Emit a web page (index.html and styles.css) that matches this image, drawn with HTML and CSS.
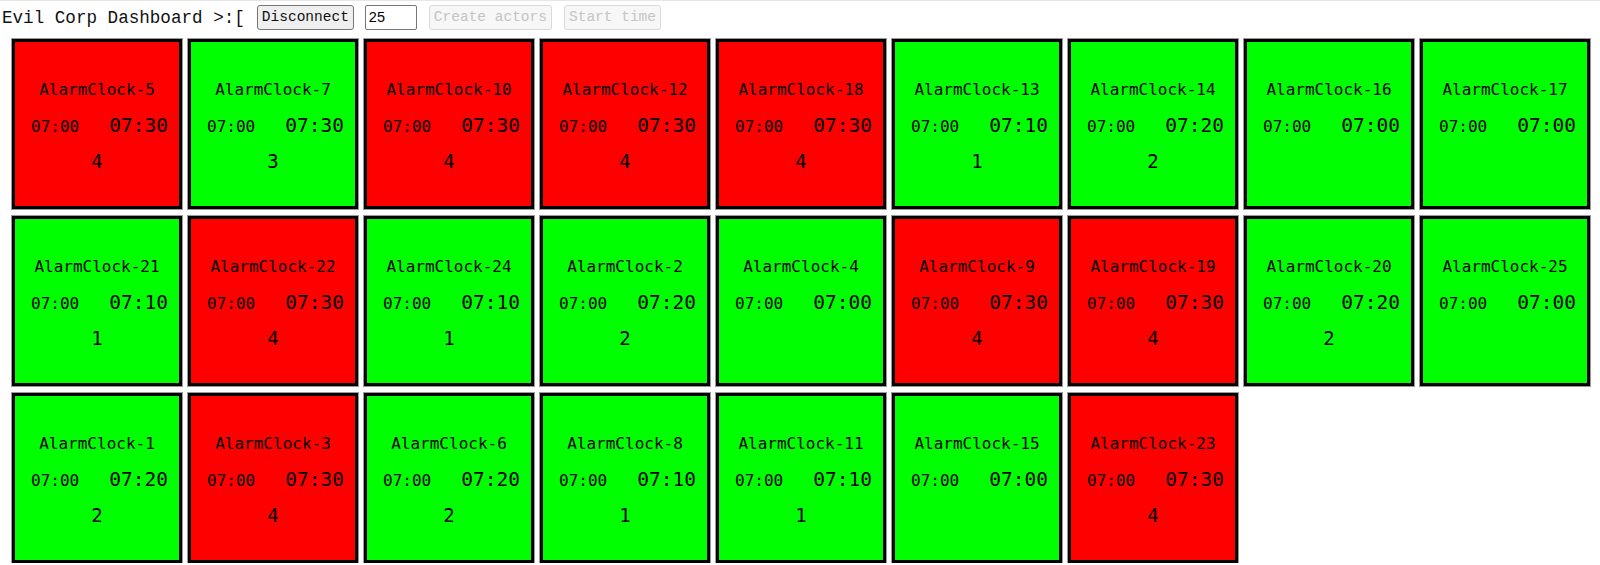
FILE: index.html
```html
<!DOCTYPE html>
<html>
<head>
<meta charset="utf-8">
<title>Evil Corp Dashboard</title>
<link rel="stylesheet" href="styles.css">
</head>
<body>
<div class="toolbar">
  <span class="title">Evil Corp Dashboard &gt;:[</span>
  <button class="btn">Disconnect</button>
  <input class="count" type="text" value="25">
  <button class="btn" disabled>Create actors</button>
  <button class="btn" disabled>Start time</button>
</div>
<div class="grid">
  <div class="clock red"><div class="name">AlarmClock-5</div><div class="times"><span class="set">07:00</span><span class="now">07:30</span></div><div class="snooze">4</div></div>
  <div class="clock green"><div class="name">AlarmClock-7</div><div class="times"><span class="set">07:00</span><span class="now">07:30</span></div><div class="snooze">3</div></div>
  <div class="clock red"><div class="name">AlarmClock-10</div><div class="times"><span class="set">07:00</span><span class="now">07:30</span></div><div class="snooze">4</div></div>
  <div class="clock red"><div class="name">AlarmClock-12</div><div class="times"><span class="set">07:00</span><span class="now">07:30</span></div><div class="snooze">4</div></div>
  <div class="clock red"><div class="name">AlarmClock-18</div><div class="times"><span class="set">07:00</span><span class="now">07:30</span></div><div class="snooze">4</div></div>
  <div class="clock green"><div class="name">AlarmClock-13</div><div class="times"><span class="set">07:00</span><span class="now">07:10</span></div><div class="snooze">1</div></div>
  <div class="clock green"><div class="name">AlarmClock-14</div><div class="times"><span class="set">07:00</span><span class="now">07:20</span></div><div class="snooze">2</div></div>
  <div class="clock green"><div class="name">AlarmClock-16</div><div class="times"><span class="set">07:00</span><span class="now">07:00</span></div><div class="snooze"></div></div>
  <div class="clock green"><div class="name">AlarmClock-17</div><div class="times"><span class="set">07:00</span><span class="now">07:00</span></div><div class="snooze"></div></div>

  <div class="clock green"><div class="name">AlarmClock-21</div><div class="times"><span class="set">07:00</span><span class="now">07:10</span></div><div class="snooze">1</div></div>
  <div class="clock red"><div class="name">AlarmClock-22</div><div class="times"><span class="set">07:00</span><span class="now">07:30</span></div><div class="snooze">4</div></div>
  <div class="clock green"><div class="name">AlarmClock-24</div><div class="times"><span class="set">07:00</span><span class="now">07:10</span></div><div class="snooze">1</div></div>
  <div class="clock green"><div class="name">AlarmClock-2</div><div class="times"><span class="set">07:00</span><span class="now">07:20</span></div><div class="snooze">2</div></div>
  <div class="clock green"><div class="name">AlarmClock-4</div><div class="times"><span class="set">07:00</span><span class="now">07:00</span></div><div class="snooze"></div></div>
  <div class="clock red"><div class="name">AlarmClock-9</div><div class="times"><span class="set">07:00</span><span class="now">07:30</span></div><div class="snooze">4</div></div>
  <div class="clock red"><div class="name">AlarmClock-19</div><div class="times"><span class="set">07:00</span><span class="now">07:30</span></div><div class="snooze">4</div></div>
  <div class="clock green"><div class="name">AlarmClock-20</div><div class="times"><span class="set">07:00</span><span class="now">07:20</span></div><div class="snooze">2</div></div>
  <div class="clock green"><div class="name">AlarmClock-25</div><div class="times"><span class="set">07:00</span><span class="now">07:00</span></div><div class="snooze"></div></div>

  <div class="clock green"><div class="name">AlarmClock-1</div><div class="times"><span class="set">07:00</span><span class="now">07:20</span></div><div class="snooze">2</div></div>
  <div class="clock red"><div class="name">AlarmClock-3</div><div class="times"><span class="set">07:00</span><span class="now">07:30</span></div><div class="snooze">4</div></div>
  <div class="clock green"><div class="name">AlarmClock-6</div><div class="times"><span class="set">07:00</span><span class="now">07:20</span></div><div class="snooze">2</div></div>
  <div class="clock green"><div class="name">AlarmClock-8</div><div class="times"><span class="set">07:00</span><span class="now">07:10</span></div><div class="snooze">1</div></div>
  <div class="clock green"><div class="name">AlarmClock-11</div><div class="times"><span class="set">07:00</span><span class="now">07:10</span></div><div class="snooze">1</div></div>
  <div class="clock green"><div class="name">AlarmClock-15</div><div class="times"><span class="set">07:00</span><span class="now">07:00</span></div><div class="snooze"></div></div>
  <div class="clock red"><div class="name">AlarmClock-23</div><div class="times"><span class="set">07:00</span><span class="now">07:30</span></div><div class="snooze">4</div></div>
</div>
</body>
</html>
```
FILE: styles.css
```css
html, body {
  margin: 0;
  padding: 0;
  background: #ffffff;
}

body {
  border-top: 1px solid #e6e6e6;
}

.toolbar {
  display: flex;
  align-items: center;
  gap: 12px;
  padding: 3px 2px 0 2px;
  height: 26px;
}

.title {
  font-family: "Liberation Mono", "Courier New", monospace;
  font-size: 17.6px;
  color: #111;
  line-height: 20px;
  position: relative;
  top: 1px;
}

.btn {
  font-family: "Liberation Mono", "Courier New", monospace;
  font-size: 14.5px;
  line-height: 17px;
  height: 25px;
  padding: 0 4px;
  color: #111;
  background: #efefef;
  border: 1px solid #767676;
  border-radius: 3px;
}

.btn:disabled {
  color: #c4c4c4;
  background: #f7f7f7;
  border-color: #d9d9d9;
}

.count {
  font-family: "Liberation Sans", Arial, sans-serif;
  font-size: 14.5px;
  width: 52px;
  height: 25px;
  box-sizing: border-box;
  padding: 1px 3px;
  margin-left: -1px;
  border: 1px solid #767676;
  border-radius: 2px;
  color: #000;
}

.grid {
  display: flex;
  flex-wrap: wrap;
  column-gap: 6px;
  row-gap: 7px;
  padding: 9px 0 0 12px;
}

.clock {
  width: 170px;
  height: 170px;
  box-sizing: border-box;
  border: 3px solid #000;
  box-shadow: 0 0 0 1px #9a9a9a;
  padding-top: 38px;
  text-align: center;
  font-family: "DejaVu Sans Mono", monospace;
  color: #000;
}

.red { background: #ff0000; }
.green { background: #00ff00; }

.name {
  font-size: 16px;
  line-height: 20px;
}

.times {
  font-size: 19.5px;
  line-height: 52px;
  padding-left: 5px;
}

.set {
  font-size: 16px;
  line-height: normal;
}

.now {
  font-size: 19.5px;
  line-height: normal;
  margin-left: 30px;
}

.snooze {
  font-size: 19px;
  line-height: 18px;
}
```
